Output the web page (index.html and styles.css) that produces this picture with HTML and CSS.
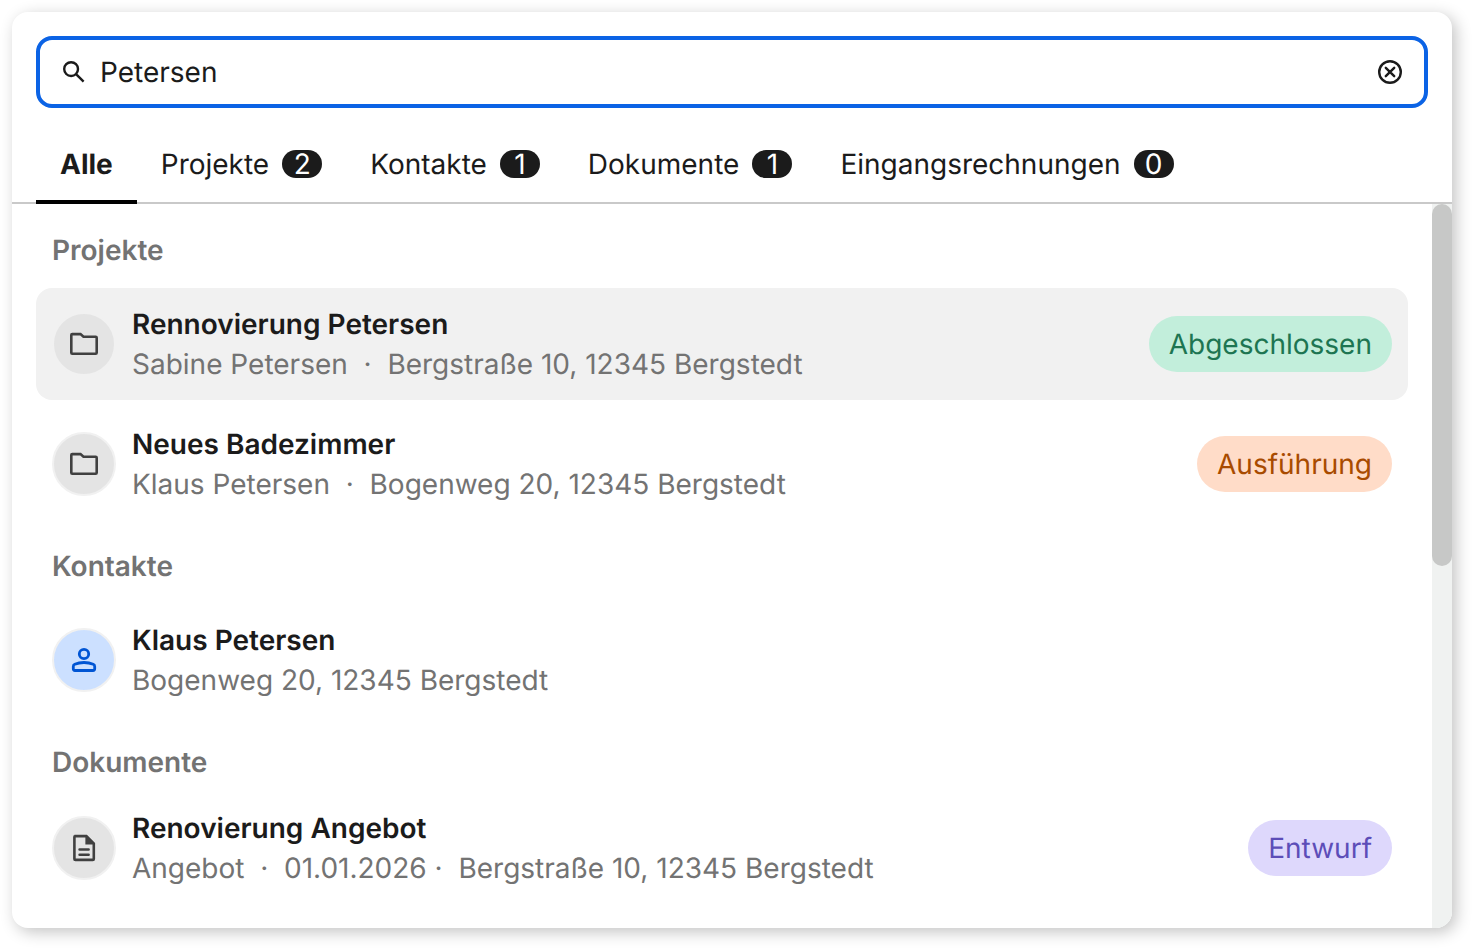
FILE: index.html
```html
<!DOCTYPE html>
<html lang="de">
<head>
<meta charset="utf-8">
<meta name="viewport" content="width=device-width, initial-scale=1">
<title>Suche</title>
<link rel="stylesheet" href="styles.css">
</head>
<body>
<main class="panel">
  <form class="search" role="search">
    <label class="search-label" for="query" aria-label="Suche">
      <svg class="icon-search" viewBox="0 0 28 28" aria-hidden="true"><circle cx="11.1" cy="11.1" r="6.9"/><path d="m15.8 15.8 7.8 7.8"/></svg>
    </label>
    <input class="search-input" id="query" type="text" value="Petersen">
    <button class="search-clear" type="reset" aria-label="Eingabe löschen">
      <svg class="icon-clear" viewBox="0 0 28 28" aria-hidden="true"><circle cx="14" cy="14" r="10.8"/><path d="m9.800 9.800 8.400 8.400m0-8.400-8.400 8.400"/></svg>
    </button>
  </form>

  <div class="tabs" role="tablist">
    <button class="tab tab-active" type="button" role="tab" aria-selected="true">Alle</button>
    <button class="tab" type="button" role="tab">Projekte<span class="count">2</span></button>
    <button class="tab" type="button" role="tab">Kontakte<span class="count">1</span></button>
    <button class="tab" type="button" role="tab">Dokumente<span class="count">1</span></button>
    <button class="tab" type="button" role="tab">Eingangsrechnungen<span class="count">0</span></button>
  </div>

  <div class="results">
    <div class="groups">
      <section class="group">
        <h2 class="group-title">Projekte</h2>
        <a class="row row-selected" href="#projekt-1">
          <span class="avatar"><svg class="icon" viewBox="0 0 32 32" aria-hidden="true"><path d="M3.3 7.1q0-1 1-1h8.2l3 2.7h12.2q1 0 1 1v14.9q0 1-1 1H4.3q-1 0-1-1z"/></svg></span>
          <span class="text"><span class="title">Rennovierung Petersen</span><span class="meta">Sabine Petersen&nbsp; ·&nbsp; Bergstraße 10, 12345 Bergstedt</span></span>
          <span class="badge badge-green">Abgeschlossen</span>
        </a>
        <a class="row" href="#projekt-2">
          <span class="avatar"><svg class="icon" viewBox="0 0 32 32" aria-hidden="true"><path d="M3.3 7.1q0-1 1-1h8.2l3 2.7h12.2q1 0 1 1v14.9q0 1-1 1H4.3q-1 0-1-1z"/></svg></span>
          <span class="text"><span class="title">Neues Badezimmer</span><span class="meta">Klaus Petersen&nbsp; ·&nbsp; Bogenweg 20, 12345 Bergstedt</span></span>
          <span class="badge badge-orange">Ausführung</span>
        </a>
      </section>

      <section class="group">
        <h2 class="group-title">Kontakte</h2>
        <a class="row" href="#kontakt-1">
          <span class="avatar avatar-blue"><svg class="icon icon-person" viewBox="0 0 32 32" aria-hidden="true"><circle cx="16" cy="10" r="4.7"/><path d="M5.3 22.4c0-1 .6-1.700 1.500-2.100 2.700-1.200 5.900-1.800 9.200-1.800s6.500.6 9.200 1.800c.9.4 1.500 1.100 1.500 2.100v2.400q0 1.700-1.700 1.700H7q-1.700 0-1.700-1.700z"/></svg></span>
          <span class="text"><span class="title">Klaus Petersen</span><span class="meta">Bogenweg 20, 12345 Bergstedt</span></span>
        </a>
      </section>

      <section class="group group-compact">
        <h2 class="group-title">Dokumente</h2>
        <a class="row" href="#dokument-1">
          <span class="avatar"><svg class="icon" viewBox="0 0 32 32" aria-hidden="true"><path d="M6.400 4.100h12l7.400 7.400v15.400q0 1-1 1H7.400q-1 0-1-1V5.100q0-1 1-1z"/><path class="icon-fold" d="M17.400 3.500v9H26.500z"/><path d="M11.600 17.500h9M11.600 22.800h9" stroke-linecap="round"/></svg></span>
          <span class="text"><span class="title">Renovierung Angebot</span><span class="meta">Angebot&nbsp; ·&nbsp; 01.01.2026 ·&nbsp; Bergstraße 10, 12345 Bergstedt</span></span>
          <span class="badge badge-purple">Entwurf</span>
        </a>
      </section>
    </div>
    <div class="scroll-track" aria-hidden="true"><div class="scroll-thumb"></div></div>
  </div>
</main>
</body>
</html>
```

FILE: styles.css
```css
* {
  box-sizing: border-box;
}

body {
  display: flex;
  min-height: 100vh;
  margin: 0;
  padding: 12px 20px 20px 12px;
  background: #fff;
  color: #1b1b1b;
  font-family: Inter, "Liberation Sans", sans-serif;
  font-size: 28px;
  font-optical-sizing: none;
  line-height: 40px;
  text-rendering: geometricPrecision;
}

button,
input {
  font: inherit;
  font-optical-sizing: inherit;
  text-rendering: inherit;
  color: inherit;
}

.panel {
  display: flex;
  flex: 1;
  flex-direction: column;
  min-width: 0;
  overflow: hidden;
  border-radius: 16px;
  background: #fff;
  box-shadow: 4px 4px 16px rgba(0, 0, 0, 0.24);
}

.search {
  display: flex;
  align-items: center;
  gap: 12px;
  margin: 24px 24px 16px;
  padding: 12px 20px;
  border: 4px solid #0b63e5;
  border-radius: 16px;
}

.search-label,
.search-clear {
  display: flex;
}

.search-input {
  flex: 1;
  min-width: 0;
  height: 40px;
  padding: 0;
  border: 0;
  outline: 0;
  background: none;
}

.search-clear {
  padding: 0;
  border: 0;
  background: none;
}

.icon-search,
.icon-clear {
  width: 28px;
  height: 28px;
  fill: none;
  stroke: #1b1b1b;
  stroke-width: 2.4;
}

.icon-clear {
  stroke-linecap: round;
}

.tabs {
  display: flex;
  height: 80px;
  padding: 0 24px;
  box-shadow: inset 0 -2px #c9c9c9;
}

.tab {
  display: flex;
  align-items: center;
  gap: 13px;
  padding: 4px 24px 0;
  border: 0;
  border-bottom: 4px solid transparent;
  background: none;
}

.tab-active {
  border-color: #000;
  font-weight: 700;
}

.count {
  min-width: 40px;
  border-radius: 14px;
  background: #1b1b1b;
  color: #fff;
  line-height: 28px;
  text-align: center;
}

.results {
  display: flex;
  flex: 1;
}

.groups {
  display: flex;
  flex: 1;
  flex-direction: column;
  gap: 28px;
  min-width: 0;
  padding: 28px 24px 24px;
}

.group {
  display: flex;
  flex-direction: column;
  gap: 8px;
}

.group-title {
  margin: 0 16px 12px;
  color: #737373;
  font-size: 28px;
  font-weight: 600;
  line-height: 36px;
}

.group-compact .group-title {
  margin-bottom: 4px;
}

.row {
  display: flex;
  align-items: center;
  gap: 16px;
  padding: 16px;
  border-radius: 16px;
  color: inherit;
  text-decoration: none;
}

.row-selected {
  background: #f1f1f1;
}

.avatar {
  display: flex;
  flex: none;
  align-items: center;
  justify-content: center;
  width: 64px;
  height: 64px;
  border: 2px solid #f1f1f1;
  border-radius: 50%;
  background: #e4e4e4;
}

.avatar-blue {
  background: #cce0ff;
}

.icon {
  width: 32px;
  height: 32px;
  fill: none;
  stroke: #404040;
  stroke-width: 2.6;
}

.icon-person {
  stroke: #0055d4;
  stroke-width: 2.8;
}

.icon-fold {
  fill: #404040;
  stroke: none;
}

.text {
  display: flex;
  flex: 1;
  flex-direction: column;
  min-width: 0;
}

.title {
  font-weight: 600;
}

.meta {
  color: #737373;
}

.badge {
  padding: 8px 20px;
  border-radius: 28px;
}

.badge-green {
  background: #c2eedb;
  color: #1d7552;
}

.badge-orange {
  background: #ffdcc8;
  color: #a84b00;
}

.badge-purple {
  background: #ded8fc;
  color: #5c4db8;
}

.scroll-track {
  width: 20px;
  background: #f0f2f1;
}

.scroll-thumb {
  height: 50%;
  border-radius: 10px;
  background: #c7c8c7;
}
```
